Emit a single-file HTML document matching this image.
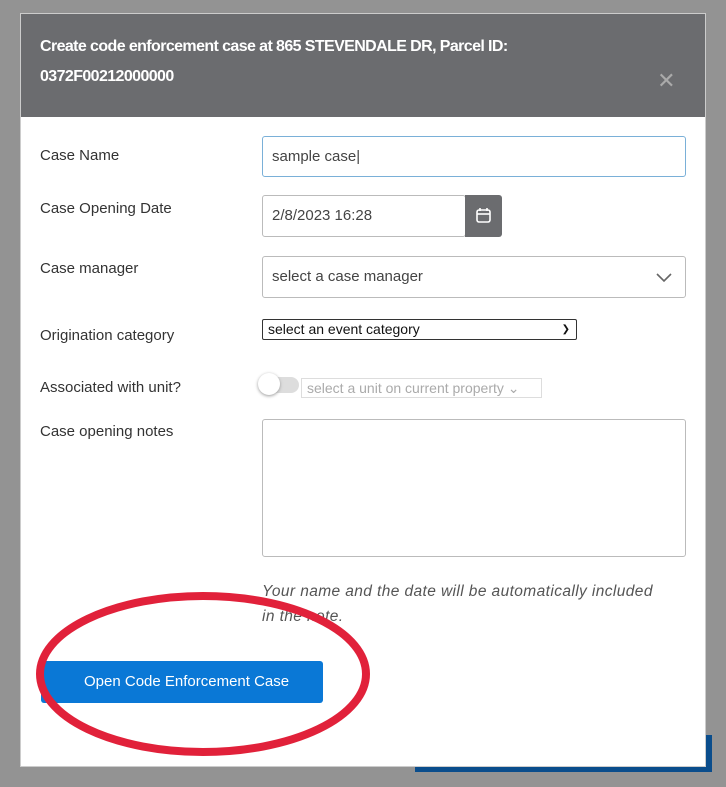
<!DOCTYPE html>
<html><head><style>
body{margin:0;width:726px;height:787px;background:#939393;position:relative;overflow:hidden;font-family:"Liberation Sans",sans-serif;}
.modal{position:absolute;left:20px;top:13px;width:686px;height:754px;background:#fff;border:1px solid #ccc;box-sizing:border-box;}
.hdr{position:absolute;left:0;top:0;width:100%;height:103px;background:#6b6c6f;color:#fff;font-weight:bold;font-size:16px;line-height:30px;padding:18px 0 0 19px;box-sizing:border-box;letter-spacing:-0.6px}
.x{position:absolute;right:30px;top:52px;color:#aaa;font-size:22px;font-weight:normal}
.lbl{position:absolute;left:19px;font-size:15px;color:#333}
.inp{position:absolute;border:1px solid #bbb;border-radius:3px;box-sizing:border-box;font-size:15px;color:#444;padding-left:9px}
</style></head><body>
<div style="position:absolute;left:415px;top:735px;width:297px;height:37px;background:#0a4d8c"></div>
<div class="modal">
<div class="hdr">Create code enforcement case at 865 STEVENDALE DR, Parcel ID:<br>0372F00212000000<span class="x">✕</span></div>
<div class="lbl" style="top:133px">Case Name</div>
<div class="inp" style="left:241px;top:122px;width:424px;height:41px;line-height:39px;border-color:#7ab0d8">sample case|</div>
<div class="lbl" style="top:186px">Case Opening Date</div>
<div class="inp" style="left:241px;top:181px;width:204px;height:42px;line-height:40px">2/8/2023 16:28</div>
<div style="position:absolute;left:444px;top:181px;width:37px;height:42px;background:#6b6c6f;border-radius:0 3px 3px 0">
<svg width="37" height="42" viewBox="0 0 37 42"><rect x="12" y="15" width="13" height="12" rx="2" fill="none" stroke="#fff" stroke-width="1.6"/><line x1="12" y1="19" x2="25" y2="19" stroke="#fff" stroke-width="1.6"/><line x1="15" y1="13" x2="15" y2="16" stroke="#fff" stroke-width="1.6"/><line x1="22" y1="13" x2="22" y2="16" stroke="#fff" stroke-width="1.6"/></svg></div>
<div class="lbl" style="top:246px">Case manager</div>
<div class="inp" style="left:241px;top:242px;width:424px;height:42px;line-height:40px">select a case manager
<svg style="position:absolute;right:12px;top:14px" width="18" height="12"><polyline points="2,3 9,10 16,3" fill="none" stroke="#666" stroke-width="1.6"/></svg></div>
<div class="lbl" style="top:313px">Origination category</div>
<div style="position:absolute;left:241px;top:305px;width:315px;height:21px;border:1px solid #333;border-radius:2px;box-sizing:border-box;font-size:14px;line-height:19px;padding-left:5px;color:#111">select an event category<span style="position:absolute;right:6px;font-size:10px">&#10095;</span></div>
<div class="lbl" style="top:365px">Associated with unit?</div>
<div style="position:absolute;left:240px;top:363px;width:38px;height:16px;background:#ddd;border-radius:8px"></div>
<div style="position:absolute;left:237px;top:359px;width:22px;height:22px;background:#fff;border-radius:50%;box-shadow:0 1px 3px #999"></div>
<div style="position:absolute;left:280px;top:364px;width:241px;height:20px;border:1px solid #ddd;font-size:14px;color:#aaa;line-height:19px;padding-left:5px;box-sizing:border-box">select a unit on current property ⌄</div>
<div class="lbl" style="top:409px">Case opening notes</div>
<div class="inp" style="left:241px;top:405px;width:424px;height:138px"></div>
<div style="position:absolute;left:241px;top:565px;font-size:15.5px;font-style:italic;color:#555;line-height:25px;width:440px;letter-spacing:0.4px">Your name and the date will be automatically included<br>in the note.</div>
<div style="position:absolute;left:20px;top:647px;width:282px;height:42px;background:#0a78d6;border-radius:3px;color:#fff;font-size:15px;line-height:42px;text-indent:43px">Open Code Enforcement Case</div>
</div>
<svg style="position:absolute;left:0;top:0" width="726" height="787"><ellipse cx="203" cy="674" rx="163" ry="78" fill="none" stroke="#e1213a" stroke-width="8"/></svg>
</body></html>
